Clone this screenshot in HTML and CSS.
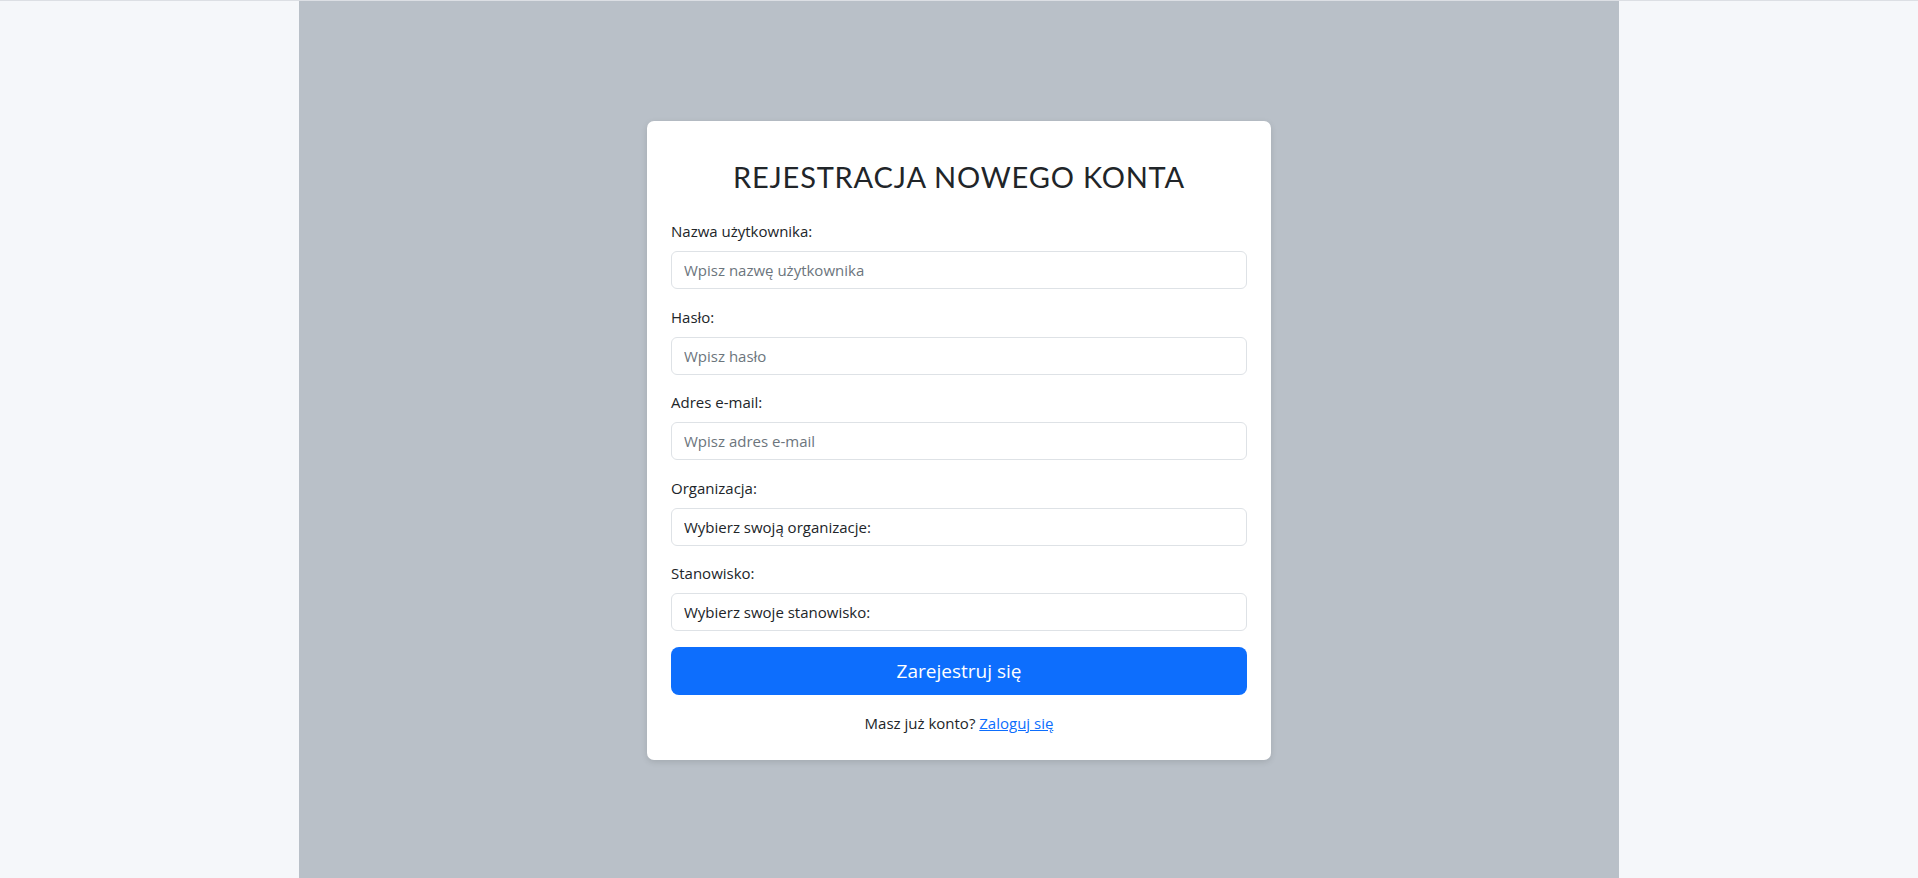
FILE: index.html
```html
<!DOCTYPE html>
<html lang="pl">
<head>
<meta charset="utf-8">
<title>Rejestracja</title>
<link rel="stylesheet" href="styles.css">
</head>
<body>
<div class="page">
  <main class="container">
    <section class="card">
      <h2 class="title">REJESTRACJA NOWEGO KONTA</h2>
      <form class="form">
        <div class="group">
          <label class="label" for="u">Nazwa użytkownika:</label>
          <input class="field" id="u" type="text" placeholder="Wpisz nazwę użytkownika">
        </div>
        <div class="group">
          <label class="label" for="p">Hasło:</label>
          <input class="field" id="p" type="password" placeholder="Wpisz hasło">
        </div>
        <div class="group">
          <label class="label" for="e">Adres e-mail:</label>
          <input class="field" id="e" type="email" placeholder="Wpisz adres e-mail">
        </div>
        <div class="group">
          <label class="label" for="o">Organizacja:</label>
          <select class="field select" id="o"><option>Wybierz swoją organizacje:</option></select>
        </div>
        <div class="group">
          <label class="label" for="s">Stanowisko:</label>
          <select class="field select" id="s"><option>Wybierz swoje stanowisko:</option></select>
        </div>
        <button class="btn" type="button">Zarejestruj się</button>
        <p class="footer">Masz już konto? <a class="link" href="#">Zaloguj się</a></p>
      </form>
    </section>
  </main>
</div>
</body>
</html>
```

FILE: styles.css
```css
* { box-sizing: border-box; }
html, body { margin: 0; padding: 0; }
body {
  background: #f5f7fa;
  font-family: "Open Sans", "Noto Sans", sans-serif;
  font-size: 15px;
  color: #212529;
  border-top: 1px solid #dcdfe4;
}
.page {
  display: flex;
  justify-content: center;
}
.container {
  width: 1320px;
  min-height: 878px;
  margin-top: -1px;
  padding-top: 3px;
  background: #b9c0c8;
  display: flex;
  align-items: center;
  justify-content: center;
}
.card {
  width: 624px;
  background: #fff;
  border-radius: 7px;
  padding: 24px 24px 25px;
  box-shadow: 0 2px 6px rgba(0,0,0,0.12);
}
.title {
  margin: 14px 0 24px;
  font-family: "Lato", sans-serif;
  font-weight: 400;
  font-size: 29px;
  line-height: 36px;
  letter-spacing: 0.8px;
  text-align: center;
  color: #212529;
}
.form { display: flex; flex-direction: column; }
.group { display: flex; flex-direction: column; margin-bottom: 15.5px; }
.label { line-height: 24px; margin-bottom: 8px; }
.field {
  height: 38px;
  width: 100%;
  border: 1px solid #dee2e6;
  border-radius: 6px;
  padding: 6px 12px;
  font-family: inherit;
  font-size: 15px;
  color: #212529;
  background: #fff;
  outline: none;
}
.field::placeholder { color: #6c757d; }
.select { appearance: none; -webkit-appearance: none; }
.btn {
  height: 48px;
  border: none;
  border-radius: 8px;
  background: #0d6efd;
  color: #fff;
  font-family: inherit;
  font-size: 19px;
  cursor: pointer;
}
.footer {
  margin: 16px 0 0;
  line-height: 24px;
  text-align: center;
}
.link { color: #0d6efd; text-decoration: underline; }
```
